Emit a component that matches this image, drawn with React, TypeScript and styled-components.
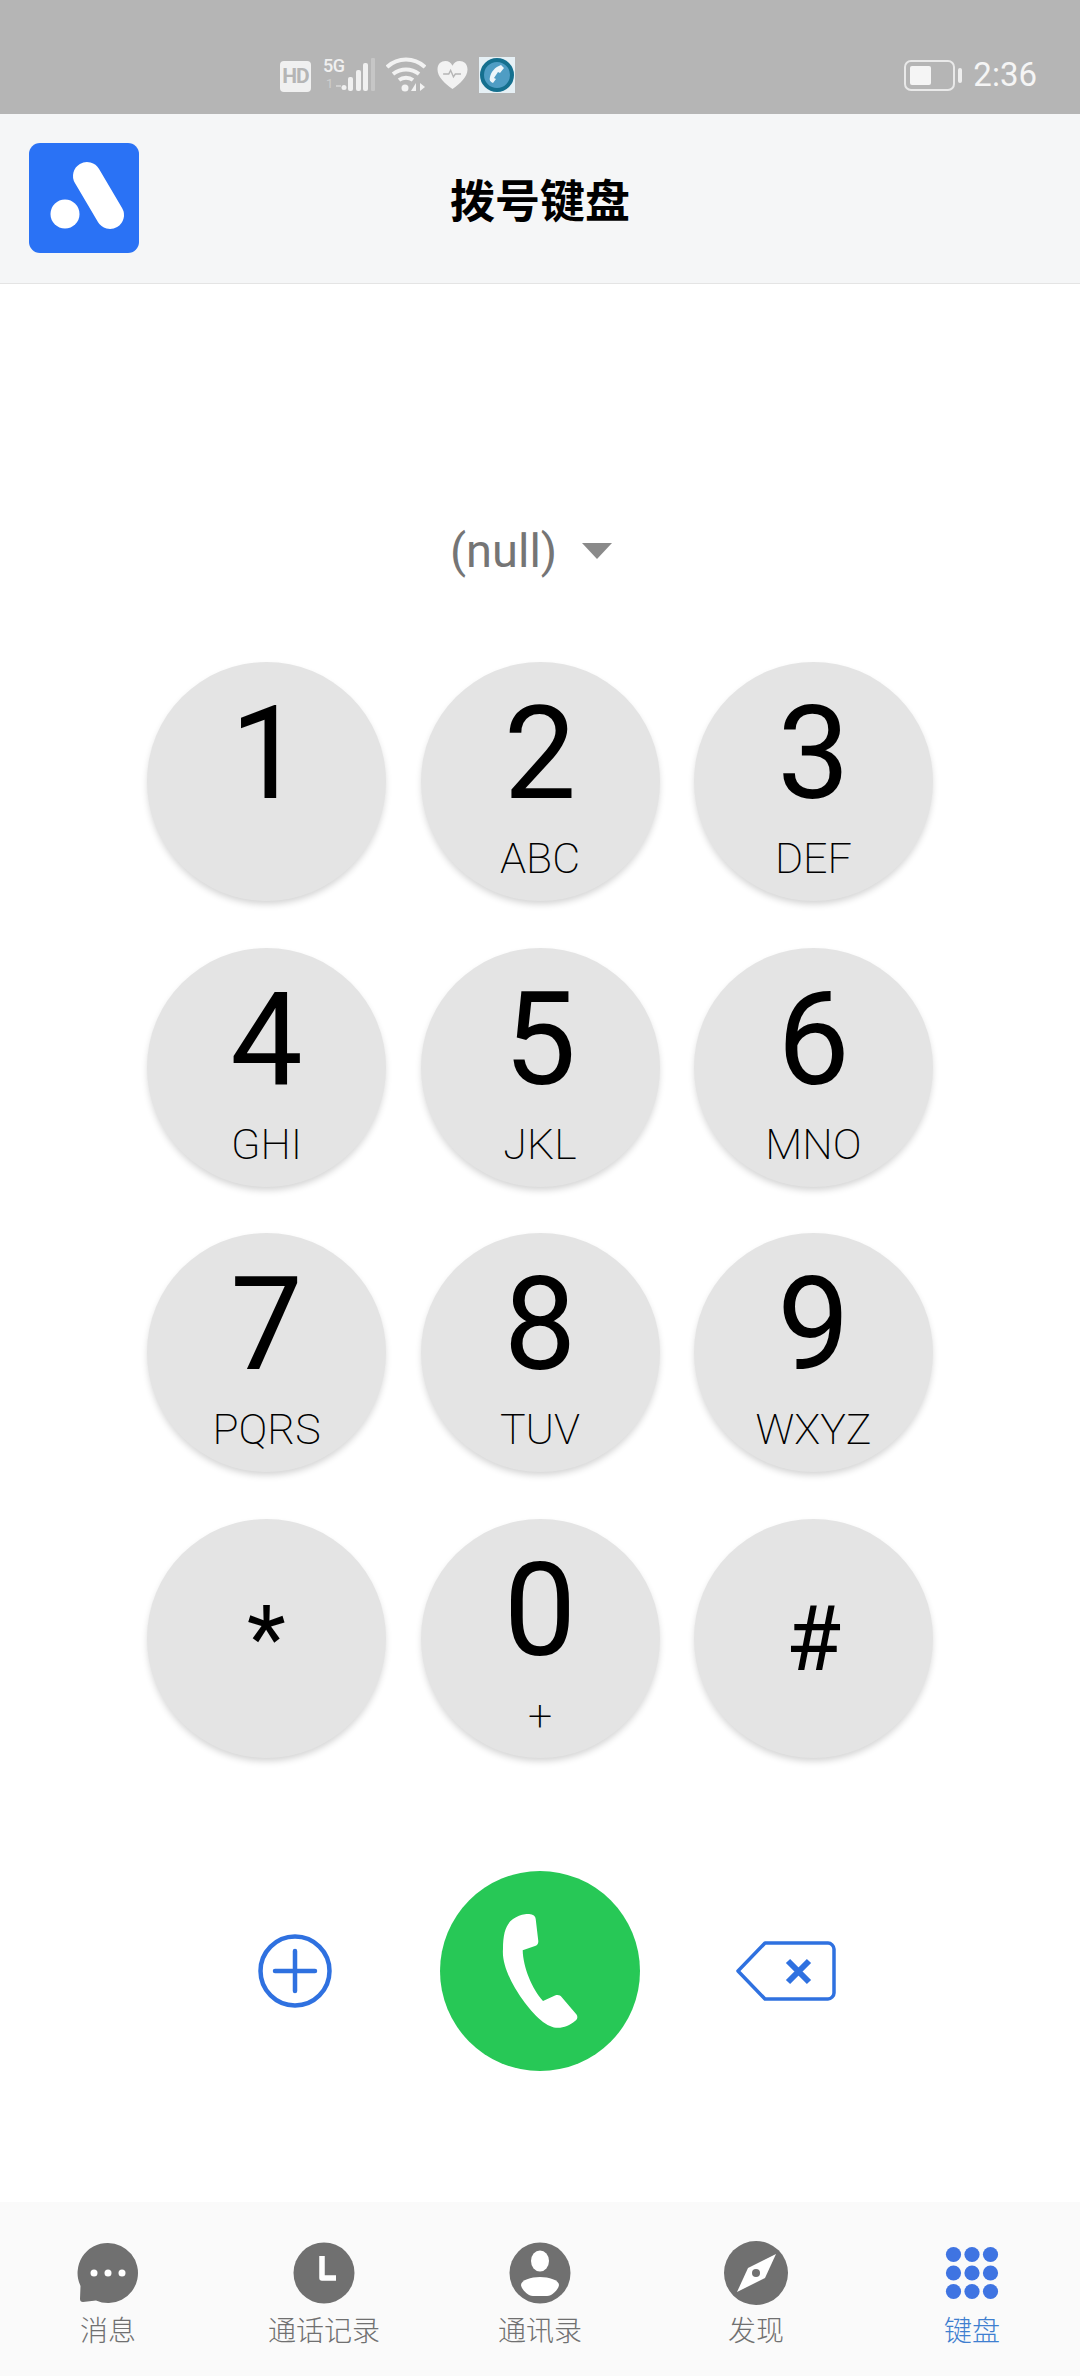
import React from "react";
import styled, { createGlobalStyle } from "styled-components";

const keys = [
  { digit: "1", letters: "" },
  { digit: "2", letters: "ABC" },
  { digit: "3", letters: "DEF" },
  { digit: "4", letters: "GHI" },
  { digit: "5", letters: "JKL" },
  { digit: "6", letters: "MNO" },
  { digit: "7", letters: "PQRS" },
  { digit: "8", letters: "TUV" },
  { digit: "9", letters: "WXYZ" },
  { digit: "*", letters: "" },
  { digit: "0", letters: "+" },
  { digit: "#", letters: "" },
];

function MessageIcon() {
  return (
    <svg width="64" height="64" viewBox="0 0 64 64">
      <path
        d="M32 2a30 30 0 1 1-12 57.500L7 61c-2 0-3-1-3-3l.5-13A30 30 0 0 1 32 2z"
        fill="#707070"
      />
      <circle cx="18" cy="32" r="3.500" fill="#fff" />
      <circle cx="32" cy="32" r="3.500" fill="#fff" />
      <circle cx="46" cy="32" r="3.500" fill="#fff" />
    </svg>
  );
}

function ClockIcon() {
  return (
    <svg width="64" height="64" viewBox="0 0 64 64">
      <circle cx="32" cy="32" r="30.500" fill="#707070" />
      <path d="M30 15v22h14" fill="none" stroke="#fff" strokeWidth="5.500" strokeLinejoin="round" />
    </svg>
  );
}

function ContactIcon() {
  return (
    <svg width="64" height="64" viewBox="0 0 64 64">
      <circle cx="32" cy="32" r="30.500" fill="#707070" />
      <ellipse cx="32" cy="20" rx="9" ry="10.500" fill="#fff" />
      <path
        d="M32 36c9 0 19 3 19 8 0 3-6 11-12 11H25c-6 0-12-8-12-11 0-5 10-8 19-8z"
        fill="#fff"
      />
    </svg>
  );
}

function CompassIcon() {
  return (
    <svg width="64" height="64" viewBox="0 0 64 64">
      <circle cx="32" cy="32" r="32" fill="#707070" />
      <path d="M52 13L41 37 13 51l11-24z" fill="#fff" />
      <circle cx="32" cy="32" r="4" fill="#707070" />
    </svg>
  );
}

function KeypadIcon() {
  const spots = [13.500, 32, 50.500];
  return (
    <svg width="64" height="64" viewBox="0 0 64 64">
      {spots.map(y =>
        spots.map(x => (
          <circle key={`${x}-${y}`} cx={x} cy={y} r="7.600" fill="#3f74e2" />
        ))
      )}
    </svg>
  );
}

const tabs = [
  { label: "消息", icon: <MessageIcon /> },
  { label: "通话记录", icon: <ClockIcon /> },
  { label: "通讯录", icon: <ContactIcon /> },
  { label: "发现", icon: <CompassIcon /> },
  { label: "键盘", icon: <KeypadIcon />, active: true },
];

function App() {
  return (
    <Page>
      <GlobalStyle />
      <StatusBar>
        <StatusIcons>
          <HdBadge>HD</HdBadge>
          <SignalGroup>
            <FiveG>5G</FiveG>
            <SimIndex>1</SimIndex>
            <svg width="53" height="36" viewBox="0 0 53 36">
              <rect x="13" y="28" width="5" height="2" fill="#cfcfcf" />
              <circle cx="21" cy="30.500" r="2.500" fill="#f0f0f0" />
              <rect x="25" y="20" width="5" height="14" rx="2" fill="#f0f0f0" />
              <rect x="33" y="13" width="5" height="21" rx="2" fill="#f0f0f0" />
              <rect x="40" y="6" width="5" height="28" rx="2" fill="#f0f0f0" />
              <rect x="48" y="1" width="4" height="33" rx="1" fill="#c6c6c6" />
            </svg>
          </SignalGroup>
          <svg width="40" height="36" viewBox="0 0 40 36">
            <g fill="none" stroke="#f2f2f2" strokeWidth="4">
              <path d="M1 10c11-10 27-10 38 0" />
              <path d="M7 17c8-6 18-6 26 0" />
              <path d="M13 23c4-3 10-3 14 0" />
            </g>
            <circle cx="19" cy="31" r="3.500" fill="#f2f2f2" />
            <path d="M30 26v8h-5zM34 26l5 4-5 4z" fill="#f2f2f2" />
          </svg>
          <svg width="33" height="30" viewBox="0 0 34 32">
            <path
              d="M17 31C9 25 1 18 1 10 1 4 5 1 9.500 1 13 1 15.500 3 17 6c1.500-3 4-5 7.500-5C29 1 33 4 33 10c0 8-8 15-16 21z"
              fill="#f2f2f2"
            />
            <path d="M7 15h6l2-4 3 7 2-3h6" fill="none" stroke="#b5b5b5" strokeWidth="1.500" />
          </svg>
          <svg width="36" height="36" viewBox="0 0 36 36">
            <rect width="36" height="36" fill="#e6f0f5" />
            <circle cx="18" cy="18" r="15" fill="#4f9dc4" stroke="#15708f" strokeWidth="4" />
            <path
              d="M22 8l3 3-4 5-2-1-4 6 2 1-3 4c-3-1-4-3-3-6 1-5 5-10 11-12z"
              fill="#eef6fa"
            />
          </svg>
        </StatusIcons>
        <StatusRight>
          <BatteryBody>
            <BatteryFill />
          </BatteryBody>
          <BatteryTip />
          <Clock>2:36</Clock>
        </StatusRight>
      </StatusBar>

      <Header>
        <Logo viewBox="0 0 110 110">
          <rect width="110" height="110" rx="11" fill="#2a72f5" />
          <line x1="58" y1="33" x2="81" y2="72" stroke="#fff" strokeWidth="28" strokeLinecap="round" />
          <circle cx="36" cy="71" r="14.500" fill="#fff" />
        </Logo>
        <Title>拨号键盘</Title>
      </Header>

      <Body>
        <SimRow>
          <SimName>(null)</SimName>
          <SimCaret />
        </SimRow>

        <KeyGrid>
          {keys.map(key => (
            <Key key={key.digit}>
              <Digit $symbol={key.digit === "*" || key.digit === "#"}>{key.digit}</Digit>
              <Letters>{key.letters}</Letters>
            </Key>
          ))}
        </KeyGrid>

        <Actions>
          <AddIcon viewBox="0 0 74 74">
            <circle cx="37" cy="37" r="34.500" fill="none" stroke="#2f71e0" strokeWidth="4.500" />
            <path d="M17 37h40M37 17v40" fill="none" stroke="#2f71e0" strokeWidth="4.500" strokeLinecap="round" />
          </AddIcon>
          <CallButton>
            <svg width="200" height="200" viewBox="0 0 200 200">
              <path
                d="M85 43.300C89 42.800 95 43 95.700 48L98.300 70C98.500 73 97 74.500 95 75L82.700 79.300C83 96 92 118 103 130L115 124.500C118 123.500 120 124 122 126.500L136.500 143.500C138 146 137.500 148 135 150C128 156 118 159 110 155C98 150 84 132 75 117C67 103 62 90 63 78C63 62 66 53 73 48C77 45.500 81 43.800 85 43.300Z"
                fill="#fff"
              />
            </svg>
          </CallButton>
          <DeleteIcon viewBox="0 0 100 60">
            <path
              d="M29 2h63c3 0 6 3 6 6v44c0 3-3 6-6 6H29L2 30z"
              fill="none"
              stroke="#2f71e0"
              strokeWidth="3.500"
              strokeLinejoin="round"
            />
            <path d="M52 20l21 21M73 20L52 41" fill="none" stroke="#2f71e0" strokeWidth="6" />
          </DeleteIcon>
        </Actions>
      </Body>

      <TabBar>
        {tabs.map(tab => (
          <Tab key={tab.label}>
            {tab.icon}
            <TabLabel $active={tab.active}>{tab.label}</TabLabel>
          </Tab>
        ))}
      </TabBar>
    </Page>
  );
}

const GlobalStyle = createGlobalStyle`
  html, body {
    margin: 0;
    padding: 0;
    background: #fff;
  }
`;

const Page = styled.div`
  width: 1080px;
  height: 2376px;
  display: flex;
  flex-direction: column;
  overflow: hidden;
  font-family: Roboto, "Noto Sans CJK SC", sans-serif;
`;

const StatusBar = styled.div`
  height: 114px;
  flex: none;
  box-sizing: border-box;
  padding: 57px 43px 0 280px;
  background: #b5b5b5;
  display: flex;
  justify-content: space-between;
  align-items: flex-start;
`;

const StatusIcons = styled.div`
  display: flex;
  align-items: center;
  gap: 10px;
  height: 36px;
`;

const HdBadge = styled.div`
  width: 31px;
  height: 31px;
  border-radius: 4px;
  margin-top: 3px;
  background: #f0f0f0;
  color: #b5b5b5;
  font-size: 21px;
  font-weight: 700;
  line-height: 31px;
  text-align: center;
  letter-spacing: -1px;
`;

const SignalGroup = styled.div`
  position: relative;
  width: 53px;
  height: 36px;
  margin-left: 2px;
`;

const FiveG = styled.span`
  position: absolute;
  left: 0;
  top: 0;
  color: #f0f0f0;
  font-size: 18px;
  font-weight: 500;
  line-height: 18px;
  letter-spacing: -0.5px;
`;

const SimIndex = styled.span`
  position: absolute;
  left: 3px;
  top: 20px;
  color: #cfcfcf;
  font-size: 13px;
  line-height: 14px;
`;

const StatusRight = styled.div`
  display: flex;
  align-items: center;
  height: 36px;
`;

const BatteryBody = styled.div`
  width: 51px;
  height: 31px;
  box-sizing: border-box;
  padding: 4px;
  border: 2px solid #e9e9e9;
  border-radius: 7px;
`;

const BatteryFill = styled.div`
  width: 21px;
  height: 100%;
  background: #f5f5f5;
  border-radius: 2px;
`;

const BatteryTip = styled.div`
  width: 4px;
  height: 15px;
  margin-left: 3px;
  background: #eeeeee;
  border-radius: 2px;
`;

const Clock = styled.div`
  margin-left: 11px;
  color: #f5f5f5;
  font-size: 33px;
  line-height: 36px;
`;

const Header = styled.header`
  position: relative;
  height: 170px;
  flex: none;
  box-sizing: border-box;
  display: flex;
  align-items: center;
  justify-content: center;
  background: #f5f6f7;
  border-bottom: 1px solid #e4e4e4;
`;

const Logo = styled.svg`
  position: absolute;
  left: 29px;
  top: 29px;
  width: 110px;
  height: 110px;
`;

const Title = styled.h1`
  margin: 0;
  color: #000;
  font-family: "Noto Sans CJK SC", sans-serif;
  font-size: 45px;
  font-weight: 700;
  line-height: 60px;
`;

const Body = styled.main`
  flex: 1;
  display: flex;
  flex-direction: column;
  background: #fff;
`;

const SimRow = styled.div`
  height: 60px;
  margin: 237px 0 0 450px;
  display: flex;
  align-items: center;
  gap: 25px;
`;

const SimName = styled.span`
  color: #757575;
  font-size: 47px;
  line-height: 60px;
`;

const SimCaret = styled.i`
  width: 0;
  height: 0;
  border-left: 15px solid transparent;
  border-right: 15px solid transparent;
  border-top: 16px solid #8a8a8a;
`;

const KeyGrid = styled.div`
  display: grid;
  grid-template-columns: repeat(3, 239px);
  column-gap: 34.500px;
  row-gap: 46.500px;
  justify-content: center;
  margin-top: 81px;
`;

const Key = styled.div`
  position: relative;
  width: 239px;
  height: 239px;
  border-radius: 50%;
  background: #e4e4e4;
  box-shadow: 0 4px 7px -1px rgba(0, 0, 0, 0.18);
  display: flex;
  flex-direction: column;
  align-items: center;
  color: #000;
`;

const Digit = styled.div<{ $symbol?: boolean }>`
  height: 129px;
  margin-top: 27px;
  font-size: 129px;
  line-height: 129px;
  font-weight: 400;
  ${props => props.$symbol && `
    font-size: 90px;
    margin-top: 56px;
  `}
`;

const Letters = styled.div`
  position: absolute;
  left: 0;
  right: 0;
  top: 172px;
  font-size: 43px;
  font-weight: 200;
  line-height: 48px;
  text-align: center;
`;

const Actions = styled.div`
  display: flex;
  align-items: center;
  margin-top: 113px;
  padding-left: 258px;
`;

const AddIcon = styled.svg`
  width: 74px;
  height: 74px;
  margin-right: 108px;
`;

const CallButton = styled.div`
  width: 200px;
  height: 200px;
  border-radius: 50%;
  background: #27c856;
  margin-right: 96px;
`;

const DeleteIcon = styled.svg`
  width: 100px;
  height: 60px;
`;

const TabBar = styled.nav`
  height: 174px;
  flex: none;
  display: grid;
  grid-template-columns: repeat(5, 216px);
  background: #fafafa;
`;

const Tab = styled.div`
  display: flex;
  flex-direction: column;
  align-items: center;
  padding-top: 39px;
`;

const TabLabel = styled.span<{ $active?: boolean }>`
  margin-top: 6px;
  color: ${props => (props.$active ? "#3f7fd0" : "#707070")};
  font-family: "Noto Sans CJK SC", sans-serif;
  font-size: 28px;
  font-weight: 300;
  line-height: 36px;
`;

export default App;
